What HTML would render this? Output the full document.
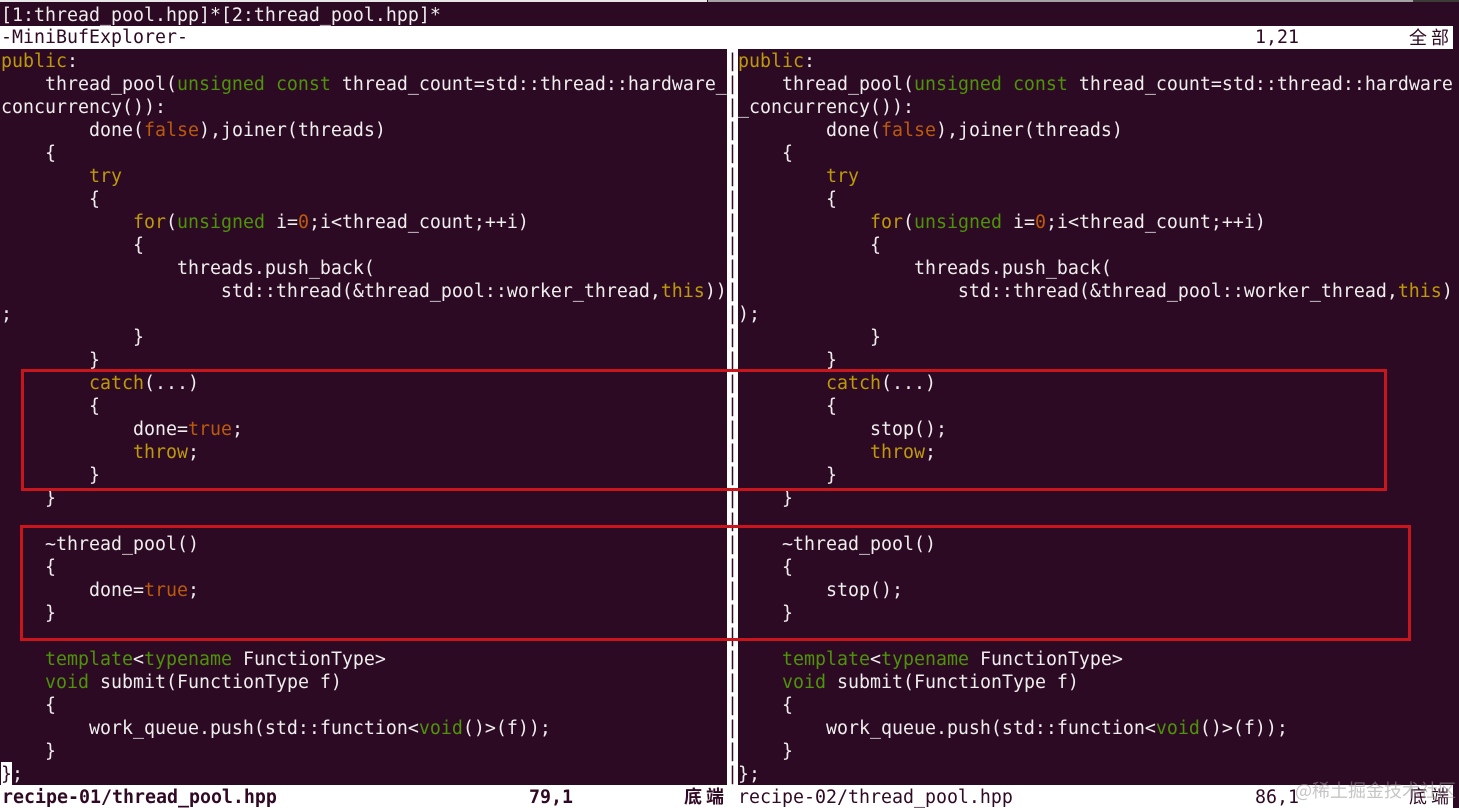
<!DOCTYPE html>
<html><head><meta charset="utf-8">
<style>
html,body{margin:0;padding:0;background:#2d0a24;}
#r{position:relative;width:1459px;height:808px;overflow:hidden;background:#2d0a24;}
#t{position:absolute;left:0;top:0;width:1459px;height:808px;filter:blur(.3px);}
pre{position:absolute;margin:0;font-family:"DejaVu Sans Mono","Liberation Mono","Noto Sans CJK SC",monospace;font-size:18.27px;line-height:23px;color:#eeeeec;white-space:pre;}
.y{color:#bd9a08}.g{color:#4c9408}.o{color:#bc5a0c}
.b{position:absolute;box-sizing:border-box;}
.d{color:#300a24}
.c{font-family:"Noto Sans CJK SC","WenQuanYi Zen Hei",sans-serif;font-size:18px;color:#300a24;position:absolute;line-height:23px;letter-spacing:4px;white-space:pre;}
</style></head><body><div id="r"><div id="t">
<div class="b" style="left:0;top:0;width:707px;height:2px;background:#e8e6e6"></div>
<div class="b" style="left:708px;top:0;width:705px;height:2px;background:#a5a3a3"></div>
<div class="b" style="left:1413px;top:0;width:46px;height:2px;background:#3c3b37"></div>

<pre style="left:1px;top:4px">[1:thread_pool.hpp]*[2:thread_pool.hpp]*</pre>

<div class="b" style="left:0;top:26px;width:1453px;height:23px;background:#fff"></div>
<pre class="d" style="left:1px;top:26px">-MiniBufExplorer-</pre>
<pre class="d" style="left:1255px;top:26px">1,21</pre>
<div class="c" style="left:1409px;top:26px">全部</div>

<div class="b" style="left:727px;top:49px;width:11px;height:736px;background:#fff"></div>
<pre class="d" style="left:727px;top:50px;">|
|
|
|
|
|
|
|
|
|
|
|
|
|
|
|
|
|
|
|
|
|
|
|
|
|
|
|
|
|
|
|</pre>

<div class="b" style="left:1px;top:762px;width:11px;height:23px;background:#fff"></div>

<pre style="left:1px;top:50px"><span class="y">public</span>:
    thread_pool(<span class="g">unsigned</span> <span class="g">const</span> thread_count=std::thread::hardware_
concurrency()):
        done(<span class="o">false</span>),joiner(threads)
    {
        <span class="y">try</span>
        {
            <span class="y">for</span>(<span class="g">unsigned</span> i=<span class="o">0</span>;i&lt;thread_count;++i)
            {
                threads.push_back(
                    std::thread(&amp;thread_pool::worker_thread,<span class="y">this</span>))
;
            }
        }
        <span class="y">catch</span>(...)
        {
            done=<span class="o">true</span>;
            <span class="y">throw</span>;
        }
    }

    ~thread_pool()
    {
        done=<span class="o">true</span>;
    }

    <span class="g">template</span>&lt;<span class="g">typename</span> FunctionType&gt;
    <span class="g">void</span> submit(FunctionType f)
    {
        work_queue.push(std::function&lt;<span class="g">void</span>()&gt;(f));
    }
<span class="d">}</span>;</pre>

<pre style="left:738px;top:50px"><span class="y">public</span>:
    thread_pool(<span class="g">unsigned</span> <span class="g">const</span> thread_count=std::thread::hardware
_concurrency()):
        done(<span class="o">false</span>),joiner(threads)
    {
        <span class="y">try</span>
        {
            <span class="y">for</span>(<span class="g">unsigned</span> i=<span class="o">0</span>;i&lt;thread_count;++i)
            {
                threads.push_back(
                    std::thread(&amp;thread_pool::worker_thread,<span class="y">this</span>)
);
            }
        }
        <span class="y">catch</span>(...)
        {
            stop();
            <span class="y">throw</span>;
        }
    }

    ~thread_pool()
    {
        stop();
    }

    <span class="g">template</span>&lt;<span class="g">typename</span> FunctionType&gt;
    <span class="g">void</span> submit(FunctionType f)
    {
        work_queue.push(std::function&lt;<span class="g">void</span>()&gt;(f));
    }
};</pre>

<div class="b" style="left:0;top:785px;width:1453px;height:23px;background:#fff"></div>
<pre class="d" style="left:2px;top:786px;font-weight:bold">recipe-01/thread_pool.hpp</pre>
<pre class="d" style="left:529px;top:786px;font-weight:bold">79,1</pre>
<div class="c" style="left:684px;top:785px;font-weight:bold">底端</div>
<pre class="d" style="left:738px;top:786px">recipe-02/thread_pool.hpp</pre>
<pre class="d" style="left:1255px;top:786px">86,1</pre>
<div class="c" style="left:1409px;top:785px">底端</div>

<div class="b" style="left:21px;top:369px;width:1366px;height:122px;border:3px solid #c8161c"></div>
<div class="b" style="left:20px;top:525px;width:1391px;height:116px;border:3px solid #c8161c"></div>

<div style="position:absolute;left:1295px;top:779px;font-family:'Noto Sans CJK SC',sans-serif;font-size:18px;line-height:23px;color:rgba(150,150,150,.55);white-space:pre">@稀土掘金技术社区</div>
</div></div></body></html>
